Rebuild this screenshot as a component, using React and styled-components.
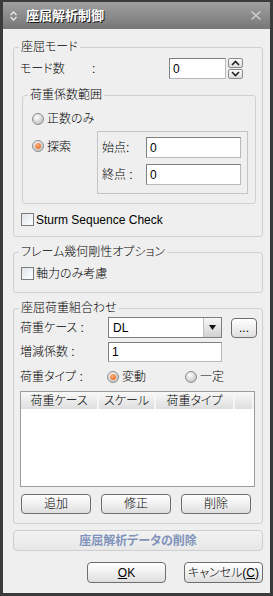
import styled, { createGlobalStyle } from "styled-components";

const GlobalStyle = createGlobalStyle`
  body {
    margin: 0;
    background: #ffffff;
  }
  * {
    box-sizing: border-box;
  }
`;

const Window = styled.div`
  width: 273px;
  height: 596px;
  display: flex;
  flex-direction: column;
  background: #efefef;
  border: 3px solid #3b3b3b;
  border-top-width: 2px;
  font-family: "Liberation Sans", "Noto Sans CJK JP", sans-serif;
  font-size: 12px;
  font-weight: 300;
  font-feature-settings: "palt";
  color: #000;
`;

const TitleBar = styled.div`
  height: 27px;
  flex-shrink: 0;
  display: flex;
  align-items: center;
  padding: 0 8px 0 6px;
  background: linear-gradient(#a0a0a0, #777777);
`;

const Title = styled.div`
  margin-left: 8px;
  font-size: 13px;
  font-weight: bold;
  color: #fff;
  text-shadow: 1px 1px 0 #1a1a1a;
  line-height: 16px;
  flex: 1;
`;

const Body = styled.div`
  flex: 1;
  display: flex;
  flex-direction: column;
  padding: 18px 7px 0 10px;
`;

const Group = styled.div`
  position: relative;
  height: ${(p) => p.$height}px;
  margin: ${(p) => p.$margin || "0"};
  border: 1px solid #d0d0d0;
  border-radius: 3px;
  display: flex;
  flex-direction: column;
  padding-left: ${(p) => p.$padLeft || 0}px;
`;

const Legend = styled.span`
  position: absolute;
  top: -8px;
  left: 5px;
  padding: 0 2px;
  background: #efefef;
  line-height: 14px;
`;

const Row = styled.div`
  display: flex;
  align-items: center;
  height: ${(p) => p.$h || 21}px;
  margin-top: ${(p) => p.$mt || 0}px;
  padding-left: ${(p) => p.$pl || 0}px;
  line-height: 14px;
`;

const Label = styled.span`
  width: ${(p) => p.$w}px;
  flex-shrink: 0;
  white-space: nowrap;
`;

const TextBox = styled.div`
  width: ${(p) => p.$w}px;
  height: ${(p) => p.$h || 21}px;
  border: 1px solid #7f7f7f;
  border-right-color: #b8b8b8;
  border-bottom-color: #b8b8b8;
  background: #fff;
  padding-left: 3px;
  display: flex;
  align-items: center;
  font-size: 12px;
`;

const SpinCol = styled.div`
  display: flex;
  flex-direction: column;
  gap: 1px;
  margin-left: 2px;
`;

const SpinButton = styled.div`
  width: 15px;
  height: 10px;
  border: 1px solid #8a8a8a;
  border-radius: 2px;
  background: linear-gradient(#fdfdfd, #dcdcdc);
  display: flex;
  align-items: center;
  justify-content: center;
`;

const RadioCircle = styled.span`
  width: 12px;
  height: 12px;
  border-radius: 50%;
  border: 1px solid #8e8e8e;
  background: radial-gradient(circle at 40% 35%, #ffffff, #c9c9c9 70%, #a9a9a9);
  display: inline-flex;
  align-items: center;
  justify-content: center;
  flex-shrink: 0;
  margin-right: 3px;

  &::after {
    content: "";
    display: ${(p) => (p.$on ? "block" : "none")};
    width: 6px;
    height: 6px;
    border-radius: 50%;
    background: radial-gradient(circle at 40% 35%, #ffb27a, #e85a12);
  }
`;

const Radio = styled.span`
  display: inline-flex;
  align-items: center;
  width: ${(p) => (p.$w ? `${p.$w}px` : "auto")};
  white-space: nowrap;
`;

const CheckBox = styled.span`
  width: 13px;
  height: 13px;
  border: 1px solid #7c7c7c;
  background: linear-gradient(135deg, #dfe4ea, #ffffff);
  margin-right: 2px;
  flex-shrink: 0;
`;

const SearchRow = styled.div`
  display: flex;
  margin-top: 4px;
`;

const RadioCol = styled.div`
  width: 65px;
  padding-top: 6px;
  display: flex;
  align-items: flex-start;
  height: 16px;
`;

const SubBox = styled.div`
  width: 151px;
  height: 63px;
  border: 1px solid #c4c4c4;
  padding: 5px 0 0 4px;
  display: flex;
  flex-direction: column;
  gap: 6px;
`;

const Combo = styled.div`
  width: 114px;
  height: 21px;
  border: 1px solid #7f7f7f;
  background: #fff;
  display: flex;
  align-items: center;
  justify-content: space-between;
  padding-left: 4px;
`;

const ComboArrow = styled.span`
  width: 18px;
  height: 19px;
  border-left: 1px solid #c0c0c0;
  background: linear-gradient(#f6f6f6, #d2d2d2);
  display: flex;
  align-items: center;
  justify-content: center;
`;

const Button = styled.div`
  width: ${(p) => p.$w}px;
  height: ${(p) => p.$h || 21}px;
  margin-left: ${(p) => p.$ml || 0}px;
  border: 1px solid #6e6e6e;
  border-radius: 4px;
  background: linear-gradient(#ffffff, #f0f0f0 50%, #dedede);
  display: flex;
  align-items: center;
  justify-content: center;
  line-height: 14px;
  flex-shrink: 0;
`;

const Table = styled.div`
  width: 235px;
  height: 96px;
  margin: 6px 0 0 6px;
  border: 1px solid #9c9c9c;
  background: #fff;
`;

const HeaderRow = styled.div`
  display: flex;
  height: 17px;
  background: linear-gradient(#f8f8f8, #dedede);
`;

const HeaderCell = styled.div`
  width: ${(p) => p.$w}px;
  flex: ${(p) => (p.$w ? "none" : 1)};
  border-right: 2px solid #f6f6f6;
  display: flex;
  align-items: center;
  justify-content: center;
  line-height: 14px;
  white-space: nowrap;
`;

const ButtonRow = styled.div`
  display: flex;
  justify-content: space-between;
  margin-top: 7px;
  padding: 0 11px 0 7px;
`;

const DeleteDataButton = styled.div`
  height: 21px;
  margin-top: 6px;
  border: 1px solid #cfcfcf;
  border-radius: 4px;
  background: linear-gradient(#f2f2f2, #e8e8e8);
  color: #8093bb;
  font-weight: bold;
  display: flex;
  align-items: center;
  justify-content: center;
  line-height: 14px;
`;

const Footer = styled.div`
  display: flex;
  justify-content: flex-end;
  gap: 18px;
  margin-top: 11px;
`;

const Underline = styled.span`
  text-decoration: underline;
`;

const Chevron = ({ up }) => (
  <svg width="9" height="6" viewBox="0 0 9 6">
    <polyline
      points={up ? "1,5 4.5,1.5 8,5" : "1,1 4.5,4.5 8,1"}
      fill="none"
      stroke="#222"
      strokeWidth="1.6"
    />
  </svg>
);

const App = () => {
  return (
    <>
      <GlobalStyle />
      <Window>
        <TitleBar>
          <svg width="9" height="12" viewBox="0 0 9 12">
            <polyline points="1.5,5 4.5,2 7.5,5" fill="none" stroke="#e8e8e8" strokeWidth="1.4" />
            <polyline points="1.5,7 4.5,10 7.5,7" fill="none" stroke="#e8e8e8" strokeWidth="1.4" />
          </svg>
          <Title>座屈解析制御</Title>
          <svg width="12" height="11" viewBox="0 0 12 11">
            <path d="M1.5 1.5 L10.5 9.5 M10.5 1.5 L1.5 9.5" stroke="#cfcfcf" strokeWidth="1.5" />
          </svg>
        </TitleBar>
        <Body>
          <Group $height={190}>
            <Legend>座屈モード</Legend>
            <Row $mt={10} $pl={6}>
              <Label $w={72}>モード数</Label>
              <span>:</span>
              <TextBox $w={57} style={{ marginLeft: "auto" }}>0</TextBox>
              <SpinCol style={{ marginRight: 19 }}>
                <SpinButton><Chevron up /></SpinButton>
                <SpinButton><Chevron /></SpinButton>
              </SpinCol>
            </Row>
            <Group $height={109} $margin="16px 6px 0 8px" $padLeft={9}>
              <Legend>荷重係数範囲</Legend>
              <Row $h={16} $mt={15}>
                <Radio><RadioCircle />正数のみ</Radio>
              </Row>
              <SearchRow>
                <RadioCol>
                  <Radio><RadioCircle $on />探索</Radio>
                </RadioCol>
                <SubBox>
                  <Row>
                    <Label $w={44}>始点:</Label>
                    <TextBox $w={95}>0</TextBox>
                  </Row>
                  <Row>
                    <Label $w={44}>終点 :</Label>
                    <TextBox $w={95}>0</TextBox>
                  </Row>
                </SubBox>
              </SearchRow>
            </Group>
            <Row $h={13} $mt={9} $pl={7}>
              <CheckBox />
              Sturm Sequence Check
            </Row>
          </Group>

          <Group $height={41} $margin="15px 0 0 0">
            <Legend>フレーム幾何剛性オプション</Legend>
            <Row $h={13} $mt={14} $pl={7}>
              <CheckBox />
              軸力のみ考慮
            </Row>
          </Group>

          <Group $height={216} $margin="15px 0 0 0">
            <Legend>座屈荷重組合わせ</Legend>
            <Row $mt={8} $pl={6}>
              <Label $w={88}>荷重ケース :</Label>
              <Combo>
                DL
                <ComboArrow>
                  <svg width="7" height="5" viewBox="0 0 7 5">
                    <polygon points="0,0 7,0 3.5,5" fill="#111" />
                  </svg>
                </ComboArrow>
              </Combo>
              <Button $w={26} $h={20} $ml={9}>...</Button>
            </Row>
            <Row $h={20} $mt={4} $pl={6}>
              <Label $w={88}>増減係数 :</Label>
              <TextBox $w={114} $h={20}>1</TextBox>
            </Row>
            <Row $h={16} $mt={7} $pl={6}>
              <Label $w={87}>荷重タイプ :</Label>
              <Radio $w={78}><RadioCircle $on />変動</Radio>
              <Radio><RadioCircle />一定</Radio>
            </Row>
            <Table>
              <HeaderRow>
                <HeaderCell $w={78}>荷重ケース</HeaderCell>
                <HeaderCell $w={57}>スケール</HeaderCell>
                <HeaderCell $w={79}>荷重タイプ</HeaderCell>
                <HeaderCell />
              </HeaderRow>
            </Table>
            <ButtonRow>
              <Button $w={70} $h={20}>追加</Button>
              <Button $w={70} $h={20}>修正</Button>
              <Button $w={70} $h={20}>削除</Button>
            </ButtonRow>
          </Group>

          <DeleteDataButton>座屈解析データの削除</DeleteDataButton>

          <Footer>
            <Button $w={79}><Underline>O</Underline>K</Button>
            <Button $w={79}>キャンセル(<Underline>C</Underline>)</Button>
          </Footer>
        </Body>
      </Window>
    </>
  );
};

export default App;
